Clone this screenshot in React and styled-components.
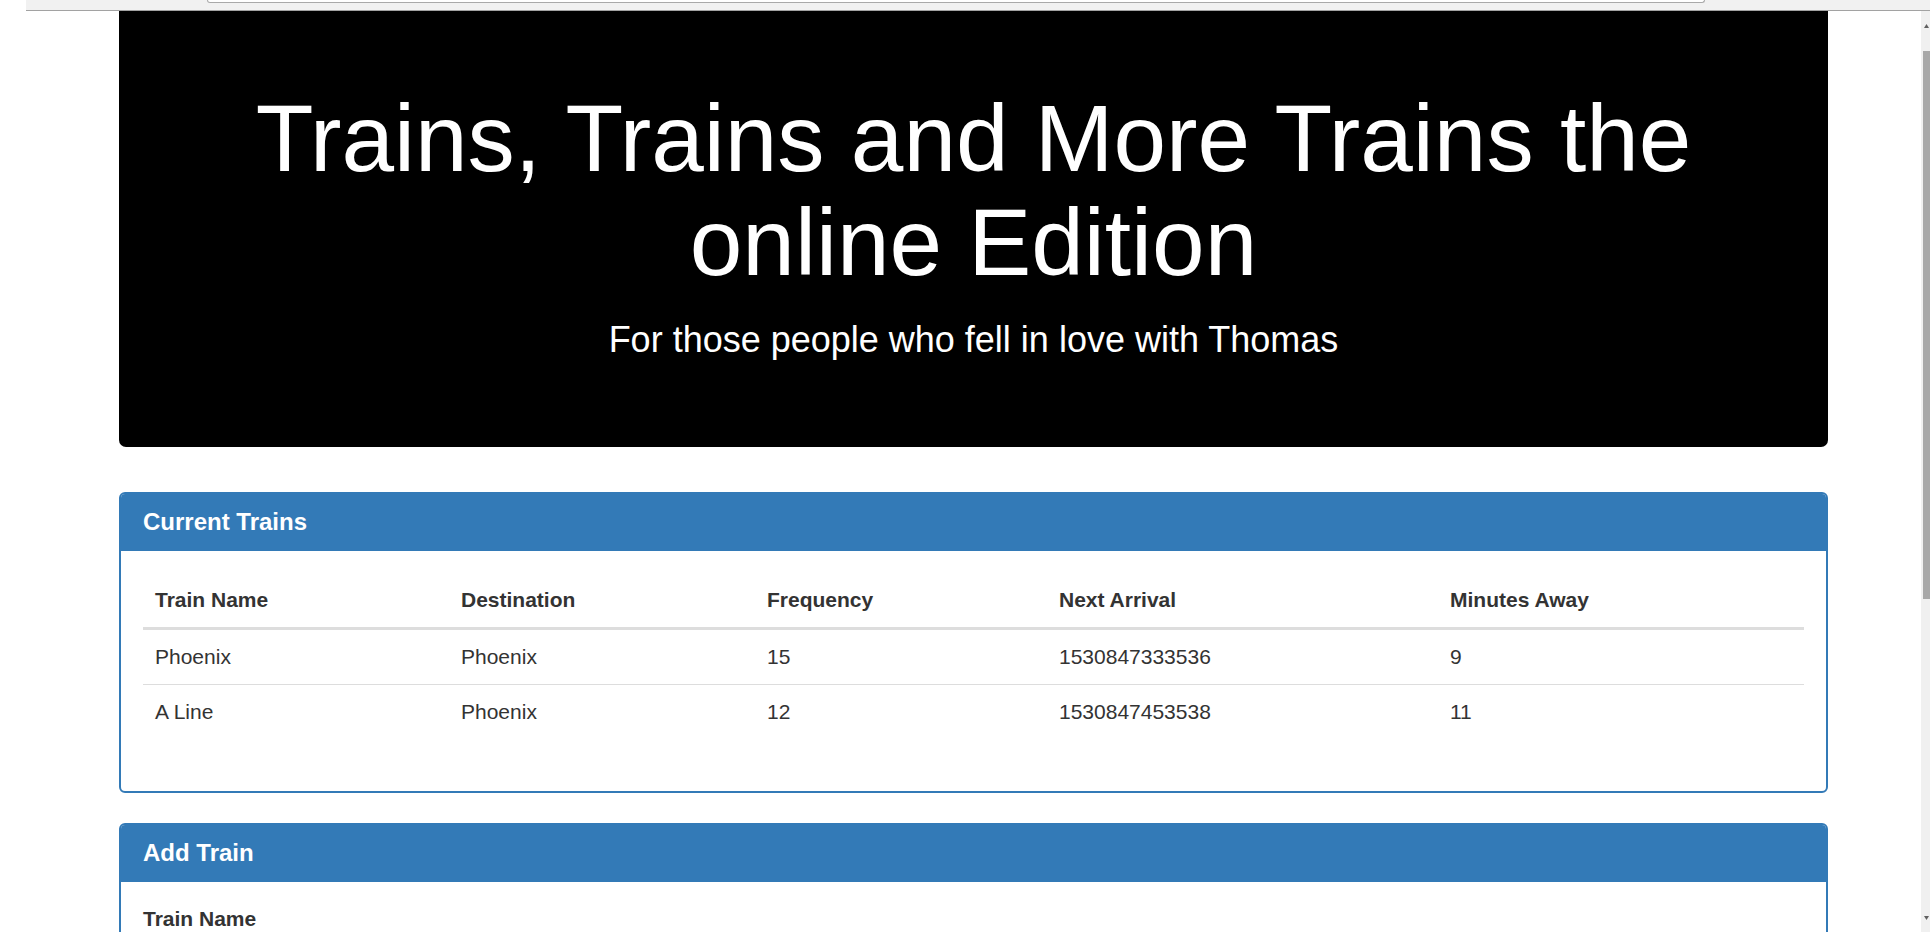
import React from "react";
import styled, { createGlobalStyle } from "styled-components";

const GlobalStyle = createGlobalStyle`
  html, body {
    margin: 0;
    padding: 0;
    background: #fff;
    overflow: hidden;
  }
  body {
    font-family: "Liberation Sans", Arial, sans-serif;
    font-size: 21px;
    line-height: 1.42857;
    color: #333;
  }
  * { box-sizing: border-box; }
`;

const Screen = styled.div`
  width: 1930px;
  height: 932px;
  display: flex;
  flex-direction: column;
  overflow: hidden;
  background: #fff;
`;

const Toolbar = styled.div`
  height: 11px;
  margin-left: 26px;
  padding-left: 181px;
  background: #f1f1f1;
  border-bottom: 1px solid #a2a2a2;
  display: flex;
  align-items: flex-start;
  flex-shrink: 0;
`;

const AddressField = styled.div`
  width: 1498px;
  height: 3px;
  background: #fff;
  border: 1px solid #a9a9a9;
  border-top: none;
  border-radius: 0 0 3px 3px;
`;

const Viewport = styled.div`
  flex: 1;
  min-height: 0;
  display: flex;
`;

const Page = styled.main`
  flex: 1;
  min-width: 0;
  padding: 0 93px 0 119px;
  overflow: hidden;
`;

const Scrollbar = styled.div`
  width: 9px;
  background: #f0f0f0;
  display: flex;
  flex-direction: column;
  align-items: flex-end;
  flex-shrink: 0;
`;

const ScrollButton = styled.div`
  width: 9px;
  height: ${(p) => p.$h}px;
  display: flex;
  align-items: center;
  justify-content: flex-end;
  padding-right: 1px;
`;

const Thumb = styled.div`
  width: 7px;
  height: 548px;
  margin-top: 10px;
  background: #a8a8a8;
`;

const Spacer = styled.div`
  flex: 1;
`;

const Jumbotron = styled.header`
  background: #000;
  color: #fff;
  text-align: center;
  padding: 75px 90px 87px;
  border-radius: 0 0 7px 7px;
  margin-bottom: 45px;
`;

const Title = styled.h1`
  margin: 0 0 25px;
  font-size: 94.5px;
  line-height: 104px;
  font-weight: 400;
`;

const Lead = styled.p`
  margin: 0;
  font-size: 36px;
  line-height: 41px;
`;

const Panel = styled.section`
  border: 2px solid #337ab7;
  border-radius: 6px;
  margin-bottom: 30px;
  background: #fff;
  overflow: hidden;
`;

const PanelHeading = styled.div`
  background: #337ab7;
  color: #fff;
  padding: 15px 22px 16px;
`;

const PanelTitle = styled.h3`
  margin: 0;
  font-size: 24px;
  line-height: 26px;
  font-weight: 700;
`;

const PanelBody = styled.div`
  padding: 22px 22px 22px;
`;

const Table = styled.table`
  width: 100%;
  border-collapse: collapse;
  border-spacing: 0;
  margin-bottom: 30px;
`;

const Th = styled.th`
  text-align: left;
  vertical-align: bottom;
  padding: 12px;
  line-height: 30px;
  font-weight: 700;
  border-bottom: 3px solid #ddd;
  width: ${(p) => (p.$w ? `${p.$w}px` : "auto")};
`;

const Td = styled.td`
  padding: 12px;
  line-height: 30px;
  vertical-align: top;
  border-top: ${(p) => (p.$first ? "none" : "1px solid #ddd")};
`;

const FormGroup = styled.div`
  margin-bottom: 22px;
`;

const Label = styled.label`
  display: block;
  font-weight: 700;
  line-height: 30px;
  margin-bottom: 7px;
`;

const Input = styled.input`
  display: block;
  width: 100%;
  height: 51px;
  padding: 9px 18px;
  font: inherit;
  color: #555;
  border: 1px solid #ccc;
  border-radius: 6px;
`;

const Arrow = ({ up }) => (
  <svg width="5" height="4" viewBox="0 0 5 4">
    <polygon points={up ? "2.5,0 5,4 0,4" : "0,0 5,0 2.5,4"} fill="#606060" />
  </svg>
);

const columns = [
  { label: "Train Name", w: 306 },
  { label: "Destination", w: 306 },
  { label: "Frequency", w: 292 },
  { label: "Next Arrival", w: 391 },
  { label: "Minutes Away" },
];

const trains = [
  ["Phoenix", "Phoenix", "15", "1530847333536", "9"],
  ["A Line", "Phoenix", "12", "1530847453538", "11"],
];

export default function App() {
  return (
    <>
      <GlobalStyle />
      <Screen>
        <Toolbar>
          <AddressField />
        </Toolbar>
        <Viewport>
          <Page>
            <Jumbotron>
              <Title>Trains, Trains and More Trains the online Edition</Title>
              <Lead>For those people who fell in love with Thomas</Lead>
            </Jumbotron>

            <Panel>
              <PanelHeading>
                <PanelTitle>Current Trains</PanelTitle>
              </PanelHeading>
              <PanelBody>
                <Table>
                  <thead>
                    <tr>
                      {columns.map((c) => (
                        <Th key={c.label} $w={c.w}>{c.label}</Th>
                      ))}
                    </tr>
                  </thead>
                  <tbody>
                    {trains.map((row, i) => (
                      <tr key={i}>
                        {row.map((cell, j) => (
                          <Td key={j} $first={i === 0}>{cell}</Td>
                        ))}
                      </tr>
                    ))}
                  </tbody>
                </Table>
              </PanelBody>
            </Panel>

            <Panel>
              <PanelHeading>
                <PanelTitle>Add Train</PanelTitle>
              </PanelHeading>
              <PanelBody>
                <FormGroup>
                  <Label>Train Name</Label>
                  <Input type="text" />
                </FormGroup>
                <FormGroup>
                  <Label>Destination</Label>
                  <Input type="text" />
                </FormGroup>
              </PanelBody>
            </Panel>
          </Page>
          <Scrollbar>
            <ScrollButton $h={30}>
              <Arrow up />
            </ScrollButton>
            <Thumb />
            <Spacer />
            <ScrollButton $h={28}>
              <Arrow />
            </ScrollButton>
          </Scrollbar>
        </Viewport>
      </Screen>
    </>
  );
}
